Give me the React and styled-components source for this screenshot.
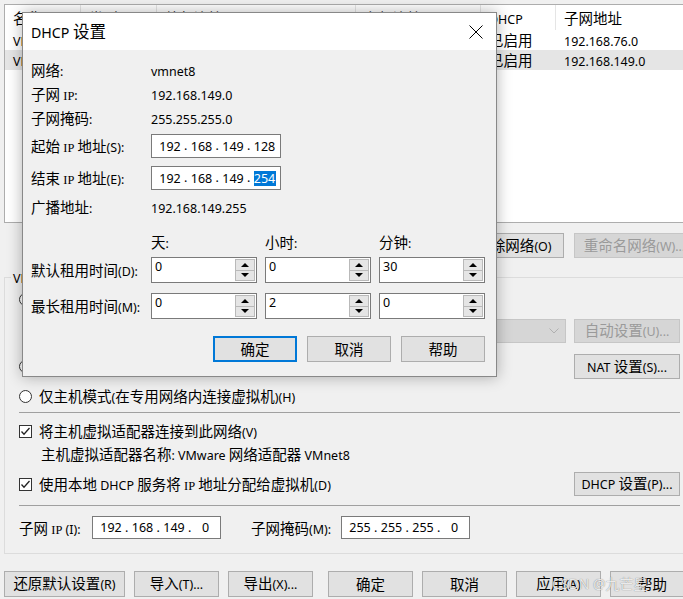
import React from 'react';
import styled, { createGlobalStyle, css } from 'styled-components';

const GlobalStyle = createGlobalStyle`
  html, body { margin: 0; padding: 0; background: #f0f0f0; overflow: hidden; }
  body { font-family: "Noto Sans", "Noto Sans CJK SC", sans-serif; font-size: 14.5px; line-height: 18px; color: #000; }
  #root { position: relative; width: 683px; height: 599px; overflow: hidden; }
  * { box-sizing: border-box; }
`;

const Txt = styled.span`white-space: pre;`;
const Lat = styled.span`font-size: 0.86em; line-height: 1;`;
const SerifLat = styled.span`font-family: "Liberation Serif", serif; font-size: 0.86em; line-height: 1;`;

const CJK_RUN = /([\u2e80-\u9fff\uff00-\uffef]+)/;
const CJK_TEST = /[\u2e80-\u9fff\uff00-\uffef]/;

function M({ children }) {
  const text = String(children);
  const out = [];
  text.split(CJK_RUN).forEach((part, i) => {
    if (!part) return;
    if (CJK_TEST.test(part)) {
      out.push(<React.Fragment key={i}>{part}</React.Fragment>);
      return;
    }
    part.split(/(IP)/).forEach((s, j) => {
      if (!s) return;
      out.push(s === 'IP' ? <SerifLat key={`${i}-${j}`}>IP</SerifLat> : <Lat key={`${i}-${j}`}>{s}</Lat>);
    });
  });
  return <Txt>{out}</Txt>;
}

/* ---------- main window ---------- */
const Window = styled.div`
  width: 695px;
  padding: 4px 0 0 4px;
  display: flex;
  flex-direction: column;
`;

const ListView = styled.div`
  height: 219px;
  flex: none;
  background: #fff;
  border: 1px solid #adadad;
  overflow: hidden;
`;

const ListHeader = styled.div`
  display: flex;
  height: 25px;
`;

const HeadCell = styled.div`
  width: ${p => p.$w}px;
  flex: none;
  padding-left: 8px;
  border-right: 1px solid #e5e5e5;
  display: flex;
  align-items: center;
  white-space: nowrap;
  overflow: hidden;
`;

const ListRow = styled.div`
  display: flex;
  height: 20px;
  align-items: center;
  background: ${p => (p.$sel ? '#e5e5e5' : 'transparent')};
`;

const Cell = styled.div`
  width: ${p => p.$w}px;
  flex: none;
  padding-left: 8px;
  white-space: nowrap;
  overflow: hidden;
`;

const NetButtons = styled.div`
  display: flex;
  justify-content: flex-end;
  gap: 10px;
  margin-top: 10px;
  height: 25px;
  flex: none;
`;

const Btn = styled.button`
  width: ${p => p.$w}px;
  height: ${p => p.$h || 26}px;
  margin-left: ${p => p.$ml || 0}px;
  flex: none;
  font-family: inherit;
  font-size: inherit;
  color: #000;
  background: #e1e1e1;
  border: 1px solid #adadad;
  padding: 0;
  white-space: nowrap;
  line-height: 1;
  &:disabled {
    background: #d6d6d6;
    border-color: #c6c6c6;
    color: #9a9a9a;
  }
  ${p => p.$default && css`border: 2px solid #0078d7;`}
`;

const Group = styled.fieldset`
  margin: 10px 0 0;
  padding: 0 14px 14px;
  border: 1px solid #dcdcdc;
  min-width: 0;
  display: flex;
  flex-direction: column;
`;

const Legend = styled.legend`
  display: block;
  height: 18px;
  padding: 0 2px;
  margin-left: -8px;
  line-height: 18px;
`;

const GRow = styled.div`
  display: flex;
  align-items: center;
  flex: none;
  height: ${p => p.$h}px;
  margin-top: ${p => p.$mt || 0}px;
  padding-left: ${p => p.$pl || 0}px;
  white-space: nowrap;
`;

const Choice = styled.div`
  display: flex;
  align-items: center;
  gap: 7px;
`;

const RadioDot = styled.span`
  width: 13px;
  height: 13px;
  flex: none;
  border-radius: 50%;
  border: 1px solid #333;
  background: #fff;
  display: flex;
  align-items: center;
  justify-content: center;
  &::after {
    content: '';
    width: 5px;
    height: 5px;
    border-radius: 50%;
    background: ${p => (p.$on ? '#222' : 'transparent')};
  }
`;

const CheckBox = styled.span`
  width: 13px;
  height: 13px;
  flex: none;
  border: 1px solid #333;
  background: #fff;
  display: flex;
  align-items: center;
  justify-content: center;
`;

const Disabled = styled.span`
  color: #a0a0a0;
`;

const Combo = styled.div`
  flex: 1;
  height: 24px;
  margin: 0 8px 0 12px;
  background: #d6d6d6;
  border: 1px solid #c6c6c6;
  display: flex;
  align-items: center;
  justify-content: flex-end;
  padding-right: 6px;
`;

const Spacer = styled.div`flex: 1;`;

const Sep = styled.div`
  height: 1px;
  flex: none;
  background: #a0a0a0;
  margin-top: ${p => p.$mt}px;
`;

const FieldLabel = styled.span`
  width: ${p => p.$w}px;
  flex: none;
  margin-left: ${p => p.$ml || 0}px;
`;

const IPField = styled.div`
  display: flex;
  align-items: center;
  width: ${p => p.$w}px;
  height: ${p => p.$h}px;
  flex: none;
  padding-left: 7px;
  background: #fff;
  border: 1px solid #7a7a7a;
  font-size: 12.5px;
`;

const Octet = styled.span`
  display: inline-block;
  width: 22px;
  text-align: center;
  line-height: 15px;
  ${p => p.$sel && css`background: #0078d7; color: #fff;`}
`;

const Dot = styled.span`
  display: inline-block;
  width: 9.5px;
  text-align: center;
`;

const Footer = styled.div`
  display: flex;
  gap: 9px;
  margin-top: 17px;
`;

/* ---------- dialog ---------- */
const Dialog = styled.div`
  position: absolute;
  left: 22px;
  top: 12px;
  width: 475px;
  height: 365px;
  border: 1px solid #888;
  background: #f0f0f0;
  box-shadow: 0 0 14px rgba(0, 0, 0, 0.3);
  display: flex;
  flex-direction: column;
`;

const TitleBar = styled.div`
  height: 37px;
  flex: none;
  background: #fff;
  display: flex;
  align-items: center;
  justify-content: space-between;
  padding-left: 8px;
`;

const Title = styled.div`
  font-size: 16.5px;
`;

const CloseBtn = styled.div`
  width: 40px;
  height: 37px;
  display: flex;
  align-items: center;
  justify-content: center;
`;

const DBody = styled.div`
  padding: 8px 11px 0 8px;
  display: flex;
  flex-direction: column;
`;

const DRow = styled.div`
  display: grid;
  grid-template-columns: 112px repeat(3, 106px);
  column-gap: 8px;
  align-items: center;
  height: ${p => p.$h}px;
  margin-top: ${p => p.$mt || 0}px;
  white-space: nowrap;
`;

const Value = styled.div`
  grid-column: 2 / -1;
`;

const SpinBox = styled.div`
  display: flex;
  height: 26px;
  border: 1px solid #7a7a7a;
  background: #fff;
`;

const SpinText = styled.div`
  flex: 1;
  padding: 1px 0 0 3px;
  font-size: 12.5px;
  line-height: 16px;
`;

const SpinCol = styled.div`
  width: 20px;
  margin: 0 1px 0 0;
  padding: 1px 0;
  display: flex;
  flex-direction: column;
`;

const SpinBtn = styled.div`
  flex: 1;
  background: #e5e5e5;
  border: 1px solid #b9b9b9;
  display: flex;
  align-items: center;
  justify-content: center;
  & + & { border-top: none; }
`;

const Arrow = styled.span`
  width: 0;
  height: 0;
  border-left: 4px solid transparent;
  border-right: 4px solid transparent;
  ${p => (p.$up ? css`border-bottom: 4px solid #000;` : css`border-top: 4px solid #000;`)}
`;

const DButtons = styled.div`
  display: flex;
  justify-content: flex-end;
  gap: 10px;
  margin-top: 17px;
`;

const Watermark = styled.div`
  position: absolute;
  left: 552px;
  top: 575px;
  font-size: 14px;
  color: rgba(255, 255, 255, 0.85);
  text-shadow: 0 0 1px rgba(0, 0, 0, 0.55);
  white-space: nowrap;
  pointer-events: none;
`;

/* ---------- pieces ---------- */
function Check() {
  return (
    <CheckBox>
      <svg width="11" height="11" viewBox="0 0 11 11">
        <polyline points="1.5,5.5 4,8.2 9.5,2" fill="none" stroke="#222" strokeWidth="1.3" />
      </svg>
    </CheckBox>
  );
}

function IP({ octets, sel, w, h }) {
  return (
    <IPField $w={w} $h={h}>
      {octets.map((o, i) => (
        <React.Fragment key={i}>
          <Octet $sel={sel === i}>{o}</Octet>
          {i < 3 && <Dot>.</Dot>}
        </React.Fragment>
      ))}
    </IPField>
  );
}

function Spin({ value }) {
  return (
    <SpinBox>
      <SpinText>{value}</SpinText>
      <SpinCol>
        <SpinBtn><Arrow $up /></SpinBtn>
        <SpinBtn><Arrow /></SpinBtn>
      </SpinCol>
    </SpinBox>
  );
}

const cols = [76, 76, 199, 125, 75, 140];
const headers = ['名称', '类型', '外部连接', '主机连接', 'DHCP', '子网地址'];
const rows = [
  ['VMnet1', '仅主机...', '-', '已连接', '已启用', '192.168.76.0'],
  ['VMnet8', 'NAT 模式', 'NAT 模式', '已连接', '已启用', '192.168.149.0'],
];

export default function App() {
  return (
    <>
      <GlobalStyle />
      <Window>
        <ListView>
          <ListHeader>
            {headers.map((h, i) => (
              <HeadCell key={h} $w={cols[i]}><M>{h}</M></HeadCell>
            ))}
          </ListHeader>
          {rows.map((r, ri) => (
            <ListRow key={ri} $sel={ri === 1}>
              {r.map((c, i) => (
                <Cell key={i} $w={cols[i]}><M>{c}</M></Cell>
              ))}
            </ListRow>
          ))}
        </ListView>

        <NetButtons>
          <Btn $w={111} $h={25}><M>添加网络(E)...</M></Btn>
          <Btn $w={100} $h={25}><M>移除网络(O)</M></Btn>
          <Btn $w={121} $h={25} disabled><M>重命名网络(W)...</M></Btn>
        </NetButtons>

        <Group>
          <Legend><M>VMnet 信息</M></Legend>
          <GRow $h={26}>
            <Choice><RadioDot /><M>桥接模式(将虚拟机直接连接到外部网络)(B)</M></Choice>
          </GRow>
          <GRow $h={24} $mt={7} $pl={20}>
            <Disabled><M>已桥接至(G):</M></Disabled>
            <Combo>
              <svg width="10" height="6" viewBox="0 0 10 6">
                <polyline points="0.5,0.5 5,5 9.5,0.5" fill="none" stroke="#b0b0b0" strokeWidth="1" />
              </svg>
            </Combo>
            <Btn $w={106} $h={24} disabled><M>自动设置(U)...</M></Btn>
          </GRow>
          <GRow $h={25} $mt={11}>
            <Choice><RadioDot $on /><M>NAT 模式(与虚拟机共享主机的 IP 地址)(N)</M></Choice>
            <Spacer />
            <Btn $w={106} $h={25}><M>NAT 设置(S)...</M></Btn>
          </GRow>
          <GRow $h={20} $mt={7}>
            <Choice><RadioDot /><M>仅主机模式(在专用网络内连接虚拟机)(H)</M></Choice>
          </GRow>
          <Sep $mt={6} />
          <GRow $h={20} $mt={8}>
            <Choice><Check /><M>将主机虚拟适配器连接到此网络(V)</M></Choice>
          </GRow>
          <GRow $h={20} $mt={3} $pl={22}>
            <M>主机虚拟适配器名称: VMware 网络适配器 VMnet8</M>
          </GRow>
          <GRow $h={24} $mt={8}>
            <Choice><Check /><M>使用本地 DHCP 服务将 IP 地址分配给虚拟机(D)</M></Choice>
            <Spacer />
            <Btn $w={106} $h={24}><M>DHCP 设置(P)...</M></Btn>
          </GRow>
          <Sep $mt={9} />
          <GRow $h={23} $mt={10}>
            <FieldLabel $w={73}><M>子网 IP (I):</M></FieldLabel>
            <IP octets={['192', '168', '149', '0']} w={129} h={23} />
            <FieldLabel $w={90} $ml={30}><M>子网掩码(M):</M></FieldLabel>
            <IP octets={['255', '255', '255', '0']} w={129} h={23} />
          </GRow>
        </Group>

        <Footer>
          <Btn $w={121}><M>还原默认设置(R)</M></Btn>
          <Btn $w={85}><M>导入(T)...</M></Btn>
          <Btn $w={85}><M>导出(X)...</M></Btn>
          <Btn $w={85} $ml={6}><M>确定</M></Btn>
          <Btn $w={85}><M>取消</M></Btn>
          <Btn $w={85}><M>应用(A)</M></Btn>
          <Btn $w={85}><M>帮助</M></Btn>
        </Footer>
      </Window>

      <Dialog>
        <TitleBar>
          <Title><M>DHCP 设置</M></Title>
          <CloseBtn>
            <svg width="14" height="14" viewBox="0 0 14 14">
              <path d="M0.5 0.5 L13.5 13.5 M13.5 0.5 L0.5 13.5" stroke="#000" strokeWidth="1" />
            </svg>
          </CloseBtn>
        </TitleBar>
        <DBody>
          <DRow $h={24}><M>网络:</M><Value><M>vmnet8</M></Value></DRow>
          <DRow $h={24}><M>子网 IP:</M><Value><M>192.168.149.0</M></Value></DRow>
          <DRow $h={24}><M>子网掩码:</M><Value><M>255.255.255.0</M></Value></DRow>
          <DRow $h={24} $mt={4}>
            <M>起始 IP 地址(S):</M>
            <Value><IP octets={['192', '168', '149', '128']} w={130} h={24} /></Value>
          </DRow>
          <DRow $h={24} $mt={8}>
            <M>结束 IP 地址(E):</M>
            <Value><IP octets={['192', '168', '149', '254']} sel={3} w={130} h={24} /></Value>
          </DRow>
          <DRow $h={24} $mt={5}><M>广播地址:</M><Value><M>192.168.149.255</M></Value></DRow>
          <DRow $h={20} $mt={13}>
            <span />
            <M>天:</M>
            <M>小时:</M>
            <M>分钟:</M>
          </DRow>
          <DRow $h={26} $mt={5}>
            <M>默认租用时间(D):</M>
            <Spin value="0" />
            <Spin value="0" />
            <Spin value="30" />
          </DRow>
          <DRow $h={26} $mt={10}>
            <M>最长租用时间(M):</M>
            <Spin value="0" />
            <Spin value="2" />
            <Spin value="0" />
          </DRow>
          <DButtons>
            <Btn $w={84} $default><M>确定</M></Btn>
            <Btn $w={84}><M>取消</M></Btn>
            <Btn $w={84}><M>帮助</M></Btn>
          </DButtons>
        </DBody>
      </Dialog>

      <Watermark>CSDN @九芒星</Watermark>
    </>
  );
}
